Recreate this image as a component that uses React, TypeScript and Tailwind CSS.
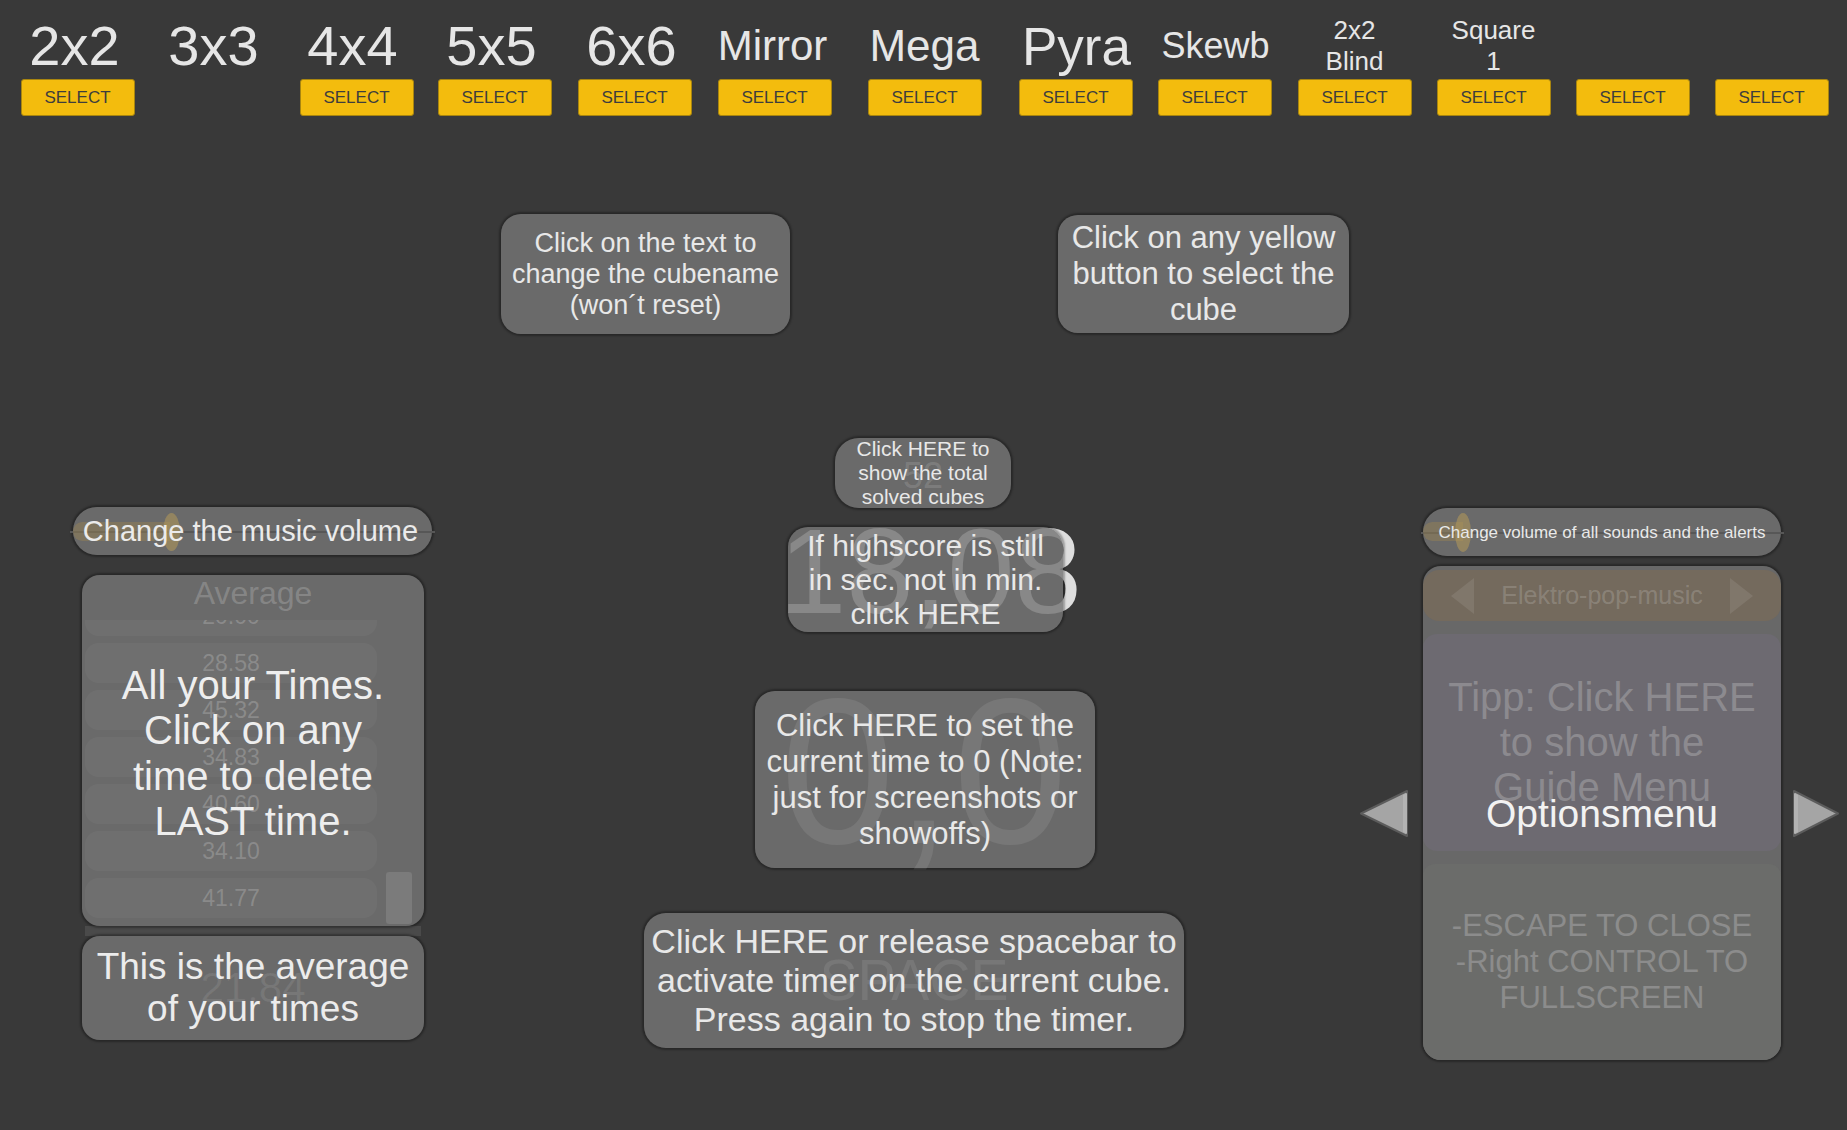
import React from "react";

type Col = { label: string[]; size: string; ml: string; btn: boolean; shift: string };

const cols: Col[] = [
  { label: ["2x2"], size: "text-[56px] leading-none", ml: "ml-[20px]", btn: true, shift: "-translate-x-[3px]" },
  { label: ["3x3"], size: "text-[56px] leading-none", ml: "ml-[24px]", btn: false, shift: "-translate-x-[3px]" },
  { label: ["4x4"], size: "text-[56px] leading-none", ml: "ml-[25px]", btn: true, shift: "-translate-x-[4px]" },
  { label: ["5x5"], size: "text-[56px] leading-none", ml: "ml-[23px]", btn: true, shift: "-translate-x-[3px]" },
  { label: ["6x6"], size: "text-[56px] leading-none", ml: "ml-[25px]", btn: true, shift: "-translate-x-[3px]" },
  { label: ["Mirror"], size: "text-[42px] leading-none", ml: "ml-[25px]", btn: true, shift: "-translate-x-[2px]" },
  { label: ["Mega"], size: "text-[44px] leading-none", ml: "ml-[35px]", btn: true, shift: "translate-x-0" },
  { label: ["Pyra"], size: "text-[53px] leading-none", ml: "ml-[36px]", btn: true, shift: "translate-x-[1px]" },
  { label: ["Skewb"], size: "text-[36px] leading-none", ml: "ml-[24px]", btn: true, shift: "translate-x-[1px]" },
  { label: ["2x2", "Blind"], size: "text-[26px] leading-[31px]", ml: "ml-[25px]", btn: true, shift: "translate-x-0" },
  { label: ["Square", "1"], size: "text-[26px] leading-[31px]", ml: "ml-[24px]", btn: true, shift: "translate-x-0" },
  { label: [], size: "text-[26px] leading-[31px]", ml: "ml-[24px]", btn: true, shift: "translate-x-0" },
  { label: [], size: "text-[26px] leading-[31px]", ml: "ml-[24px]", btn: true, shift: "translate-x-0" },
];

const times = ["20.00", "28.58", "45.32", "34.83", "40.60", "34.10", "41.77"];

function LeftArrow() {
  return (
    <svg width="50" height="49" viewBox="0 0 50 49" className="shrink-0">
      <polygon points="2,24.5 48,2 48,47" fill="#a5a5a5" stroke="#5c5c5c" strokeWidth="2" strokeLinejoin="round" />
      <polygon points="44,6 48,4 48,45 44,43" fill="#b3b3b3" />
    </svg>
  );
}

function RightArrow() {
  return (
    <svg width="48" height="49" viewBox="0 0 48 49" className="shrink-0">
      <polygon points="2,2 46,24.5 2,47" fill="#a5a5a5" stroke="#5c5c5c" strokeWidth="2" strokeLinejoin="round" />
      <polygon points="2,4 6,6 6,43 2,45" fill="#b3b3b3" />
    </svg>
  );
}

function SmallTri({ dir }: { dir: "l" | "r" }) {
  return (
    <svg width="25" height="38" viewBox="0 0 25 38">
      {dir === "l" ? (
        <polygon points="1,19 24,1 24,37" fill="rgba(255,255,255,0.09)" />
      ) : (
        <polygon points="1,1 24,19 1,37" fill="rgba(255,255,255,0.09)" />
      )}
    </svg>
  );
}

export default function App() {
  return (
    <div className="h-[1130px] w-[1847px] overflow-hidden bg-[#393939] font-['Liberation_Sans',Arial,sans-serif] text-[#e8e8e8]">
      {/* Top cube selector bar */}
      <div className="flex pt-[13px]">
        {cols.map((c, i) => (
          <div key={i} className={`flex w-[115px] shrink-0 flex-col items-center ${c.ml}`}>
            <div className={`flex h-[66px] flex-col items-center justify-center whitespace-nowrap text-center text-[#e6e6e6] ${c.size} ${c.shift}`}>
              {c.label.map((l, j) => (
                <span key={j}>{l}</span>
              ))}
            </div>
            {c.btn ? (
              <button className="flex h-[37px] w-[114px] items-center justify-center rounded-[3px] border border-[#a8850f] bg-[#f3bc0d] text-[17px] leading-none text-[#3d3d3d]">
                SELECT
              </button>
            ) : (
              <div className="h-[37px]" />
            )}
          </div>
        ))}
      </div>

      {/* Upper hint boxes */}
      <div className="mt-[98px] flex items-start">
        <div className="ml-[501px] flex h-[120px] w-[289px] items-center justify-center rounded-[20px] bg-[rgba(118,118,118,0.81)] text-center text-[27px] leading-[31px] shadow-[0_0_2px_2px_rgba(0,0,0,0.3)] whitespace-nowrap">
          <div>
            Click on the text to
            <br />
            change the cubename
            <br />
            (won´t reset)
          </div>
        </div>
        <div className="ml-[268px] mt-[1px] flex h-[118px] w-[291px] items-center justify-center rounded-[20px] bg-[rgba(118,118,118,0.81)] text-center text-[31px] leading-[36px] shadow-[0_0_2px_2px_rgba(0,0,0,0.3)] whitespace-nowrap">
          <div>
            Click on any yellow
            <br />
            button to select the
            <br />
            cube
          </div>
        </div>
      </div>

      {/* Main row */}
      <div className="mt-[104px] flex items-start">
        {/* Left column */}
        <div className="ml-[73px] mt-[69px] flex w-[359px] shrink-0 flex-col">
          <div className="relative flex h-[48px] w-[359px] items-center justify-center rounded-full bg-[rgba(118,118,118,0.81)] shadow-[0_0_2px_2px_rgba(0,0,0,0.3)]">
            <div className="absolute left-[-3px] right-[-3px] top-[24px] h-[2px] bg-[#575757]" />
            <div className="absolute left-0 top-[15px] h-[19px] w-[97px] rounded-l-full bg-[rgba(160,135,80,0.4)]" />
            <div className="absolute left-[90px] top-[6px] h-[38px] w-[17px] rounded-[50%] bg-[rgba(175,150,90,0.6)]" />
            <span className="relative -translate-x-[2px] whitespace-nowrap text-[29px] leading-none text-[#ebebeb]">Change the music volume</span>
          </div>

          <div className="ml-[9px] mt-[20px] flex w-[342px] flex-col">
            <div className="relative h-[351px] w-[342px] overflow-hidden rounded-[18px] bg-[rgba(118,118,118,0.81)] shadow-[0_0_2px_2px_rgba(0,0,0,0.3)]">
              <div className="absolute left-0 right-0 top-[2px] text-center text-[32px] leading-none text-white/20">Average</div>
              <div className="absolute bottom-[2px] left-[3px] top-[45px] w-[330px] overflow-hidden">
                <div className="-mt-[24px] flex flex-col gap-[7px]">
                  {times.map((t) => (
                    <div key={t} className="flex h-[40px] w-[292px] shrink-0 items-center justify-center rounded-[14px] bg-white/[0.035] text-[23px] leading-none text-white/20">
                      {t}
                    </div>
                  ))}
                </div>
                <div className="absolute left-[301px] top-[252px] h-[52px] w-[26px] rounded-[3px] bg-[#7b7b7b]" />
              </div>
              <div className="absolute inset-0 flex items-center justify-center pt-[6px] text-center text-[40px] leading-[45.5px] text-[#eeeeee] whitespace-nowrap">
                <div>
                  All your Times.
                  <br />
                  Click on any
                  <br />
                  time to delete
                  <br />
                  LAST time.
                </div>
              </div>
            </div>
            <div className="mx-[3px] h-[10px] bg-[#4a4a4a]" />
            <div className="relative flex h-[104px] w-[342px] items-center justify-center rounded-[18px] bg-[rgba(118,118,118,0.81)] text-center shadow-[0_0_2px_2px_rgba(0,0,0,0.3)]">
              <div className="absolute inset-0 flex items-center justify-center text-[42px] leading-none text-white/[0.09]">21.84</div>
              <div className="relative whitespace-nowrap text-[37px] leading-[42px] text-[#ececec]">
                This is the average
                <br />
                of your times
              </div>
            </div>
          </div>
        </div>

        {/* Center column */}
        <div className="ml-[212px] flex w-[540px] shrink-0 flex-col items-start">
          <div className="relative ml-[191px] flex h-[70px] w-[176px] items-center justify-center rounded-[24px] bg-[rgba(118,118,118,0.81)] text-center shadow-[0_0_2px_2px_rgba(0,0,0,0.3)]">
            <div className="absolute inset-0 flex items-center justify-center pt-[5px] text-[36px] leading-none text-white/[0.15]">52</div>
            <div className="relative whitespace-nowrap text-[21px] leading-[24px]">
              Click HERE to
              <br />
              show the total
              <br />
              solved cubes
            </div>
          </div>

          <div className="relative ml-[144px] mt-[19px] h-[105px] w-[275px]">
            <span className="absolute left-[-9px] top-[-16px] whitespace-nowrap text-[121px] leading-none text-[#dedede]">18,08</span>
            <div className="absolute inset-0 rounded-[20px] bg-[rgba(118,118,118,0.83)] shadow-[0_0_2px_2px_rgba(0,0,0,0.3)]" />
            <div className="relative flex h-full items-center justify-center whitespace-nowrap text-center text-[30px] leading-[34px]">
              <div>
                If highscore is still
                <br />
                in sec. not in min.
                <br />
                click HERE
              </div>
            </div>
          </div>

          <div className="relative ml-[111px] mt-[59px] flex h-[177px] w-[340px] items-center justify-center rounded-[20px] bg-[rgba(118,118,118,0.81)] text-center shadow-[0_0_2px_2px_rgba(0,0,0,0.3)]">
            <span className="absolute left-[25px] top-[-23px] whitespace-nowrap text-[207px] leading-none text-white/[0.09]">0,0</span>
            <div className="relative whitespace-nowrap text-[31px] leading-[36px]">
              Click HERE to set the
              <br />
              current time to 0 (Note:
              <br />
              just for screenshots or
              <br />
              showoffs)
            </div>
          </div>

          <div className="relative mt-[45px] flex h-[135px] w-[540px] items-center justify-center rounded-[22px] bg-[rgba(118,118,118,0.81)] text-center shadow-[0_0_2px_2px_rgba(0,0,0,0.3)]">
            <div className="absolute inset-0 flex items-center justify-center text-[57px] leading-none text-white/[0.09]">SPACE</div>
            <div className="relative whitespace-nowrap text-[34px] leading-[39px]">
              Click HERE or release spacebar to
              <br />
              activate timer on the current cube.
              <br />
              Press again to stop the timer.
            </div>
          </div>
        </div>

        {/* Right column */}
        <div className="ml-[175px] mt-[70px] flex shrink-0 flex-col">
          <div className="relative ml-[64px] flex h-[48px] w-[358px] items-center justify-center rounded-full bg-[rgba(118,118,118,0.81)] shadow-[0_0_2px_2px_rgba(0,0,0,0.3)]">
            <div className="absolute left-[-2px] right-[-3px] top-[24px] h-[2px] bg-[#575757]" />
            <div className="absolute left-0 top-[14px] h-[19px] w-[40px] rounded-l-full bg-[rgba(160,135,80,0.4)]" />
            <div className="absolute left-[32px] top-[5px] h-[39px] w-[16px] rounded-[50%] bg-[rgba(175,150,90,0.6)]" />
            <span className="relative whitespace-nowrap text-[17px] leading-none text-[#e9e9e9]">Change volume of all sounds and the alerts</span>
          </div>

          <div className="mt-[10px] flex items-center">
            <LeftArrow />
            <div className="relative ml-[14px] h-[494px] w-[358px] rounded-[18px] bg-[#686868] shadow-[0_0_2px_2px_rgba(0,0,0,0.3)]">
              <div className="absolute left-0 right-0 top-[4px] flex h-[51px] items-center justify-between rounded-[16px] bg-[rgba(150,110,60,0.25)] px-[27px]">
                <SmallTri dir="l" />
                <span className="text-[25px] leading-none text-white/[0.18]">Elektro-pop-music</span>
                <SmallTri dir="r" />
              </div>
              <div className="absolute left-0 right-0 top-[68px] flex h-[217px] items-center justify-center rounded-[14px] bg-[#6d6a71] text-center">
                <div className="whitespace-nowrap text-[40px] leading-[45px] text-[#8c8a8f]">
                  Tipp: Click HERE
                  <br />
                  to show the
                  <br />
                  Guide Menu
                </div>
              </div>
              <div className="absolute bottom-0 left-0 right-0 top-[298px] flex items-center justify-center rounded-b-[18px] rounded-t-[12px] bg-[#6b6c6a] text-center">
                <div className="whitespace-nowrap text-[31px] leading-[36px] text-[#8c8c8c]">
                  -ESCAPE TO CLOSE
                  <br />
                  -Right CONTROL TO
                  <br />
                  FULLSCREEN
                </div>
              </div>
              <div className="absolute inset-0 flex items-center justify-center">
                <span className="text-[39px] leading-none text-[#f2f2f2]">Optionsmenu</span>
              </div>
            </div>
            <div className="ml-[11px]">
              <RightArrow />
            </div>
          </div>
        </div>
      </div>
    </div>
  );
}
